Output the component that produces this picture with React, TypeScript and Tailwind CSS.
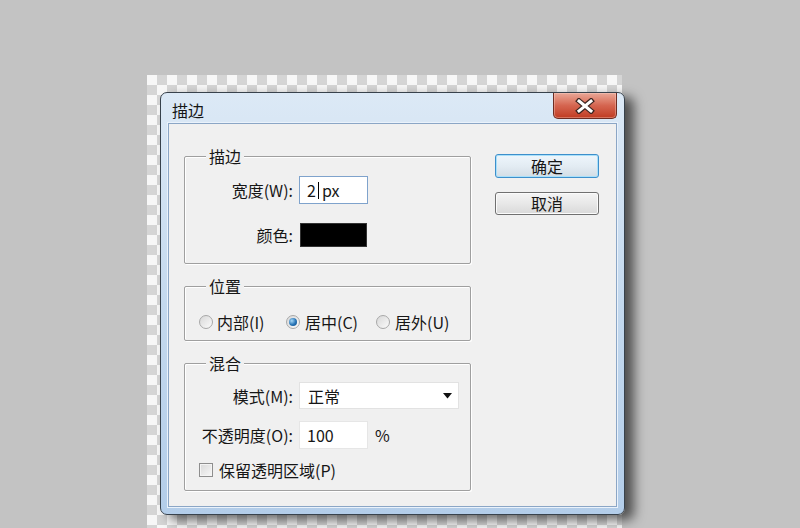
import React from "react";

function Radio({ checked }: { checked?: boolean }) {
  return (
    <span className="w-[14px] h-[14px] shrink-0 rounded-full border border-[#a8a8a8] bg-linear-to-br from-[#d8d8d8] to-[#fbfbfb] flex items-center justify-center">
      {checked && (
        <span className="w-[8px] h-[8px] rounded-full bg-[radial-gradient(circle_at_35%_35%,#a6d8f7,#2673b5_55%,#0f4c86)]" />
      )}
    </span>
  );
}

function Group({
  title,
  className,
  children,
}: {
  title: string;
  className: string;
  children: React.ReactNode;
}) {
  return (
    <div className={"relative w-[287px] border border-[#9f9f9f] rounded-[2px] shadow-[inset_1px_1px_0_#ffffff,1px_1px_0_#ffffff] " + className}>
      <span className="absolute left-[21px] -top-[12px] px-[3px] leading-[22px] bg-[#f0f0f0]">{title}</span>
      {children}
    </div>
  );
}

export default function App() {
  return (
    <div className="w-[800px] h-[528px] overflow-hidden bg-[#c3c3c3] pl-[147px] pt-[75px] font-['Noto_Sans_CJK_SC','Microsoft_YaHei',sans-serif] text-[16px] text-[#161616]">
      <div className="w-[475px] h-[470px] bg-[image:conic-gradient(#d5d5d5_25%,#f7f7f7_0_50%,#d5d5d5_0_75%,#f7f7f7_0)] bg-size-[20px_20px] bg-[length:20px_20px] pl-[13px] pt-[17px]">
        <div className="w-[465px] h-[423px] rounded-[7px] border border-[#38424c] bg-linear-to-b from-[#dce9f6] via-[#c4d9ee] to-[#b3cde9] flex flex-col shadow-[9px_5px_12px_rgba(0,0,0,0.6)]">
          {/* title bar */}
          <div className="h-[30px] flex justify-between pl-[11px] pr-[7px]">
            <span className="leading-[30px] pt-[2px]">描边</span>
            <div className="w-[64px] h-[26px] rounded-b-[5px] border border-t-0 border-[#6d2c22] bg-linear-to-b from-[#e8a797] via-[#d56550] to-[#c03a20] flex items-center justify-center shadow-[inset_0_0_0_1px_rgba(255,220,210,0.35)]">
              <svg width="20" height="16" viewBox="0 0 20 16">
                <path d="M4 3 L16 13 M16 3 L4 13" stroke="#3b2521" strokeWidth="5.5" strokeLinecap="square" />
                <path d="M4 3 L16 13 M16 3 L4 13" stroke="#ffffff" strokeWidth="3" strokeLinecap="square" />
              </svg>
            </div>
          </div>
          {/* client */}
          <div className="mx-[7px] mb-[7px] flex-1 border border-[#8ba6c6] bg-[#f0f0f0] flex pl-[15px] shadow-[0_0_0_1px_#eaf2fb]">
            <div className="flex flex-col pt-[32px] gap-[22px]">
              <Group title="描边" className="h-[108px] pt-[19px] flex flex-col gap-[17px]">
                <div className="flex items-center h-[28px]">
                  <span className="w-[109px] text-right pr-[1px]">宽度(W):</span>
                  <div className="ml-[5px] w-[69px] h-[28px] border border-[#7fa3cc] bg-white flex items-center pl-[7px]">
                    <span>2</span>
                    <span className="w-[1px] h-[17px] bg-black ml-[2px] mr-[3px]" />
                    <span>px</span>
                  </div>
                </div>
                <div className="flex items-center h-[28px]">
                  <span className="w-[109px] text-right pr-[1px]">颜色:</span>
                  <div className="ml-[6px] w-[67px] h-[24px] bg-black border border-[#333]" />
                </div>
              </Group>
              <Group title="位置" className="h-[55px] pt-[25px] pl-[14px]">
                <div className="flex items-center h-[20px]">
                  <div className="w-[87px] flex items-center gap-[4px]">
                    <Radio />
                    <span>内部(I)</span>
                  </div>
                  <div className="w-[90px] flex items-center gap-[5px]">
                    <Radio checked />
                    <span>居中(C)</span>
                  </div>
                  <div className="flex items-center gap-[5px]">
                    <Radio />
                    <span>居外(U)</span>
                  </div>
                </div>
              </Group>
              <Group title="混合" className="h-[128px] pt-[18px] flex flex-col">
                <div className="flex items-center h-[27px]">
                  <span className="w-[109px] text-right pr-[1px]">模式(M):</span>
                  <div className="ml-[5px] w-[160px] h-[27px] bg-white border border-[#e2e2e2] flex items-center justify-between pl-[8px] pr-[6px]">
                    <span>正常</span>
                    <svg width="9" height="6" viewBox="0 0 9 6">
                      <path d="M0 0 H9 L4.5 5.5 Z" fill="#111" />
                    </svg>
                  </div>
                </div>
                <div className="flex items-center h-[28px] mt-[12px]">
                  <span className="w-[109px] text-right pr-[1px] whitespace-nowrap">不透明度(O):</span>
                  <div className="ml-[5px] w-[69px] h-[28px] bg-white border border-[#e6e6e6] flex items-center pl-[7px]">
                    100
                  </div>
                  <span className="ml-[7px]">%</span>
                </div>
                <div className="flex items-center h-[20px] mt-[11px] pl-[14px] gap-[6px]">
                  <span className="w-[14px] h-[14px] border border-[#8e8e8e] bg-linear-to-br from-[#d9d9d9] to-[#f7f7f7] shadow-[inset_0_0_0_1px_#f4f4f4]" />
                  <span>保留透明区域(P)</span>
                </div>
              </Group>
            </div>
            <div className="flex flex-col pt-[30px] pl-[24px]">
              <button className="w-[104px] h-[24px] rounded-[3px] border border-[#3d8fcb] bg-linear-to-b from-[#eef6fc] via-[#e3ecf3] to-[#d3dde5] shadow-[inset_0_0_0_1px_#a9e0fa] leading-[22px]">
                确定
              </button>
              <button className="mt-[14px] w-[104px] h-[23px] rounded-[3px] border border-[#707070] bg-linear-to-b from-[#f4f4f4] via-[#e8e8e8] to-[#d9d9d9] shadow-[inset_0_0_0_1px_#fbfbfb] leading-[21px]">
                取消
              </button>
            </div>
          </div>
        </div>
      </div>
    </div>
  );
}
